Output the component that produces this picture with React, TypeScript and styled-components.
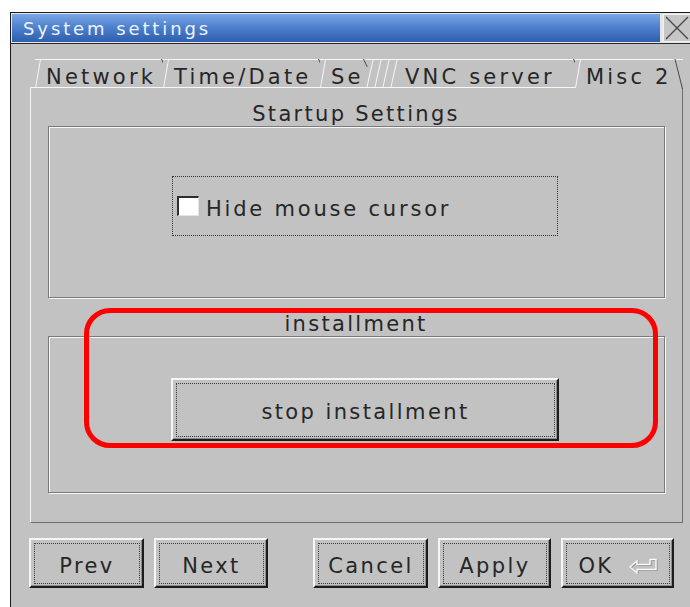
import React from 'react'
import styled, { createGlobalStyle } from 'styled-components'

const GlobalStyle = createGlobalStyle`
  html, body {
    margin: 0;
    padding: 0;
    background: #ffffff;
    overflow: hidden;
  }
  body {
    font-family: "DejaVu Sans", "Liberation Sans", sans-serif;
    color: #262626;
  }
`

const Gray = '#c2c2c2'
const Light = '#f6f6f6'
const Dark = '#1c1c1c'

/* window frame */
const Window = styled.div`
  position: relative;
  width: 680px;
  height: 595px;
  margin: 12px 0 0 10px;
  border-top: 1px solid #1a1a1a;
  border-left: 1px solid #1a1a1a;
  overflow: hidden;
`

const TitleRow = styled.div`
  display: flex;
  padding: 1px 0 1px 1px;
  background: #e6e6e6;
  border-bottom: 1px solid #2a2a2a;
`

const Caption = styled.div`
  flex: 1;
  height: 28px;
  padding-left: 11px;
  line-height: 29px;
  font-size: 18px;
  letter-spacing: 2.9px;
  color: #eef3fb;
  background: linear-gradient(to bottom, #7aa6e4 0%, #4f82cf 45%, #2e5ead 100%);
`

const CloseBox = styled.div`
  width: 26px;
  height: 26px;
  margin-left: 3px;
  background: #c6c6c6;
  border: 1px solid #f2f2f2;
  display: flex;
  align-items: center;
  justify-content: center;
`

/* dialog body */
const Body = styled.div`
  background: ${Gray};
  height: 100%;
  padding: 15px 0 0 19px;
`

const TabStrip = styled.div`
  display: flex;
  height: 28px;
  margin-left: 5px;
  position: relative;
  z-index: 1;
`

const Tab = styled.div<{ $w: number; $active?: boolean; $bare?: boolean }>`
  position: relative;
  box-sizing: border-box;
  width: ${p => p.$w}px;
  height: ${p => (p.$active ? 29 : 28)}px;
  padding: 5px 0 0 ${p => (p.$bare ? 2 : 11)}px;
  border-top: 1px solid ${Light};
  background: ${Gray};
  font-size: 21px;
  line-height: 24px;
  letter-spacing: 3.2px;
  white-space: nowrap;
  overflow: visible;

  &::before {
    content: '';
    display: ${p => (p.$bare ? 'none' : 'block')};
    position: absolute;
    left: 0;
    top: -1px;
    width: 1px;
    height: 29px;
    background: ${Light};
    transform: skewX(-10deg);
    transform-origin: bottom left;
  }

  &::after {
    content: '';
    position: absolute;
    right: ${p => (p.$active ? 0 : 1)}px;
    top: -1px;
    width: 1px;
    height: ${p => (p.$active ? 30 : 8)}px;
    background: #4a4a4a;
    transform: skewX(${p => (p.$active ? 14 : 25)}deg);
    transform-origin: ${p => (p.$active ? 'bottom right' : 'top right')};
  }
`

const Scroller = styled.div`
  width: 38px;
  height: 28px;
  box-sizing: border-box;
  border-top: 1px solid ${Light};
`

const Pane = styled.div`
  box-sizing: border-box;
  width: 653px;
  height: 436px;
  padding: 15px 18px 0 17px;
  border-top: 1px solid ${Light};
  border-left: 1px solid ${Light};
  border-right: 1px solid #6e6e6e;
  border-bottom: 1px solid #6e6e6e;
`

/* group boxes */
const GroupTitle = styled.div<{ $top?: number }>`
  height: 23px;
  margin-top: ${p => p.$top ?? 0}px;
  line-height: 23px;
  text-align: center;
  font-size: 21px;
  letter-spacing: 2.3px;
`

const GroupFrame = styled.div<{ $h: number }>`
  box-sizing: border-box;
  width: 617px;
  height: ${p => p.$h}px;
  border: 1px solid #7a7a7a;
  box-shadow: inset 1px 1px 0 ${Light}, 1px 1px 0 ${Light};
  display: flex;
  align-items: flex-start;
`

const CheckRow = styled.label`
  box-sizing: border-box;
  width: 386px;
  height: 60px;
  margin: 49px 0 0 123px;
  padding-left: 4px;
  border: 1px dotted #333333;
  display: flex;
  align-items: center;
  gap: 7px;
`

const CheckBox = styled.span`
  box-sizing: border-box;
  width: 22px;
  height: 20px;
  background: #ffffff;
  border-top: 2px solid #2e2e2e;
  border-left: 2px solid #2e2e2e;
  border-right: 1px solid #e4e4e4;
  border-bottom: 1px solid #e4e4e4;
`

const CheckLabel = styled.span`
  font-size: 21px;
  letter-spacing: 2.8px;
  padding-top: 5px;
`

/* push buttons */
const PushButton = styled.button<{ $w: number; $h: number; $before?: number }>`
  box-sizing: border-box;
  width: ${p => p.$w}px;
  height: ${p => p.$h}px;
  margin: 0 0 0 ${p => p.$before ?? 0}px;
  padding: 3px 2px 2px 3px;
  background: ${Gray};
  border: 2px solid;
  border-color: ${Light} ${Dark} ${Dark} ${Light};
  box-shadow: inset -1px -1px 0 #8c8c8c;
  font-family: inherit;
  font-size: 21px;
  letter-spacing: 2.4px;
  color: #262626;
  display: flex;
`

const BigButton = styled(PushButton)`
  margin: 41px 0 0 122px;
`

const ButtonFace = styled.span`
  flex: 1;
  display: flex;
  align-items: center;
  justify-content: center;
  gap: 14px;
  padding-top: 4px;
  border: 1px dotted #3a3a3a;
`

const ButtonRow = styled.div`
  display: flex;
  gap: 10px;
  margin: 15px 0 0 -1px;
`

/* red annotation ring drawn over the installment group */
const Highlight = styled.div`
  position: absolute;
  left: 73px;
  top: 295px;
  width: 574px;
  height: 140px;
  box-sizing: border-box;
  border: 5px solid #ff0000;
  border-radius: 26px;
  pointer-events: none;
`

function CloseGlyph() {
  return (
    <svg width='24' height='24' viewBox='0 0 24 24'>
      <path d='M1 1 L23 23 M23 1 L1 23' stroke='#4a4a4a' strokeWidth='1.4' />
    </svg>
  )
}

function ScrollMarks() {
  return (
    <svg width='38' height='27' viewBox='0 0 38 27'>
      {[2, 10, 18, 26].map(x => (
        <path key={x} d={`M${x} 27 L${x + 6} 0`} stroke={Light} strokeWidth='1' />
      ))}
    </svg>
  )
}

function ReturnGlyph() {
  return (
    <svg width='30' height='16' viewBox='0 0 30 16'>
      <path
        d='M2 9 L9 3 L9 6.5 L22 6.5 L22 1.5 L28 1.5 L28 11.5 L9 11.5 L9 15 Z'
        fill='none'
        stroke='#8a8a8a'
        strokeWidth='1.4'
        transform='translate(0.8 0.8)'
      />
      <path
        d='M2 9 L9 3 L9 6.5 L22 6.5 L22 1.5 L28 1.5 L28 11.5 L9 11.5 L9 15 Z'
        fill='none'
        stroke='#fbfbfb'
        strokeWidth='1.4'
      />
    </svg>
  )
}

export default function App() {
  return (
    <>
      <GlobalStyle />
      <Window>
        <TitleRow>
          <Caption>System settings</Caption>
          <CloseBox>
            <CloseGlyph />
          </CloseBox>
        </TitleRow>

        <Body>
          <TabStrip>
            <Tab $w={128}>Network</Tab>
            <Tab $w={157}>Time/Date</Tab>
            <Tab $w={45}>Se</Tab>
            <Scroller>
              <ScrollMarks />
            </Scroller>
            <Tab $w={172} $bare>VNC server</Tab>
            <Tab $w={108} $active>Misc 2</Tab>
          </TabStrip>

          <Pane>
            <GroupTitle>Startup Settings</GroupTitle>
            <GroupFrame $h={172}>
              <CheckRow>
                <CheckBox />
                <CheckLabel>Hide mouse cursor</CheckLabel>
              </CheckRow>
            </GroupFrame>

            <GroupTitle $top={15}>installment</GroupTitle>
            <GroupFrame $h={157}>
              <BigButton $w={388} $h={63}>
                <ButtonFace>stop installment</ButtonFace>
              </BigButton>
            </GroupFrame>
          </Pane>

          <ButtonRow>
            <PushButton $w={115} $h={50}>
              <ButtonFace>Prev</ButtonFace>
            </PushButton>
            <PushButton $w={114} $h={50}>
              <ButtonFace>Next</ButtonFace>
            </PushButton>
            <PushButton $w={115} $h={50} $before={35}>
              <ButtonFace>Cancel</ButtonFace>
            </PushButton>
            <PushButton $w={113} $h={50}>
              <ButtonFace>Apply</ButtonFace>
            </PushButton>
            <PushButton $w={113} $h={50}>
              <ButtonFace>
                OK
                <ReturnGlyph />
              </ButtonFace>
            </PushButton>
          </ButtonRow>
        </Body>

        <Highlight />
      </Window>
    </>
  )
}
